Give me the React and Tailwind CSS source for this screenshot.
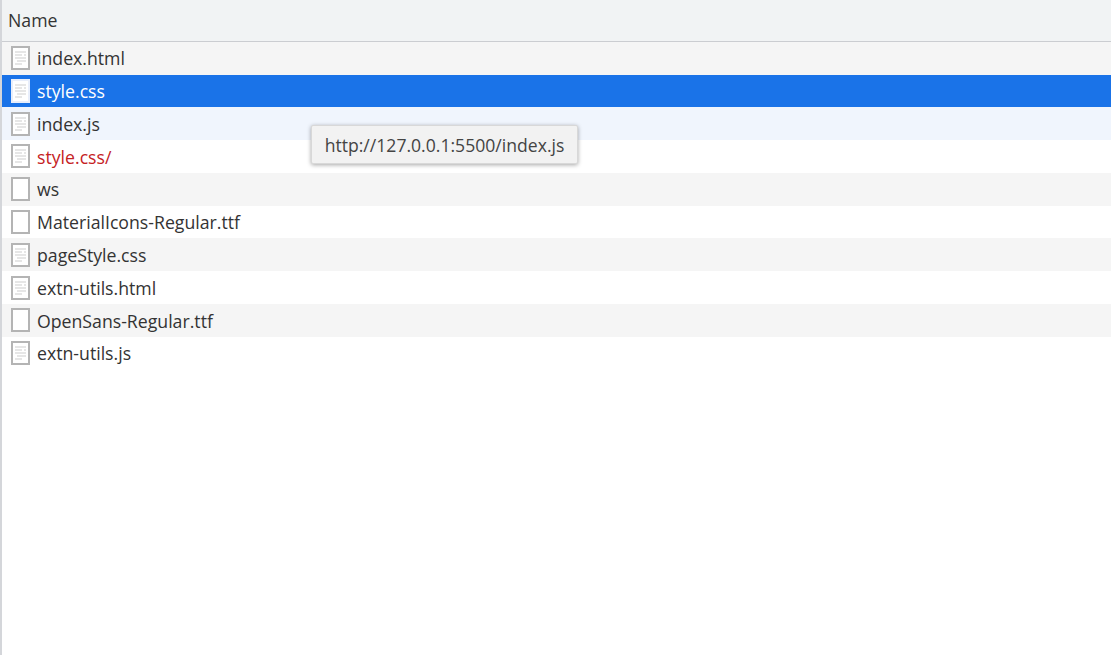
const files = [
  { name: "index.html", icon: "doc", bg: "bg-[#f5f5f5]" },
  { name: "style.css", icon: "doc", bg: "bg-[#1a73e8]", text: "text-white" },
  { name: "index.js", icon: "doc", bg: "bg-[#f0f5fd]" },
  { name: "style.css/", icon: "doc", bg: "bg-white", text: "text-[#c5221f]" },
  { name: "ws", icon: "blank", bg: "bg-[#f5f5f5]" },
  { name: "MaterialIcons-Regular.ttf", icon: "blank", bg: "bg-white" },
  { name: "pageStyle.css", icon: "doc", bg: "bg-[#f5f5f5]" },
  { name: "extn-utils.html", icon: "doc", bg: "bg-white" },
  { name: "OpenSans-Regular.ttf", icon: "blank", bg: "bg-[#f5f5f5]" },
  { name: "extn-utils.js", icon: "doc", bg: "bg-white" },
];

function FileIcon({ type, selected }) {
  return (
    <svg width="19" height="24" viewBox="0 0 19 24" className="shrink-0 blur-[0.4px]">
      <rect
        x="1"
        y="1"
        width="17"
        height="22"
        fill="#fff"
        stroke={selected ? "#e8eefb" : "#b4b4b4"}
        strokeWidth="2"
      />
      {type === "doc" && (
        <path
          d="M4 6h11M4 9h7M13 9h2M4 12h11M6 15h9M4 18h7"
          stroke="#dedede"
          strokeWidth="1.6"
          fill="none"
        />
      )}
    </svg>
  );
}

function FileRow({ file }) {
  const selected = file.name === "style.css";
  return (
    <div className={`flex h-[32.8px] items-center gap-[7px] pl-[9px] ${file.bg}`}>
      <FileIcon type={file.icon} selected={selected} />
      <span className={`pt-[2px] text-[17.7px] leading-none ${file.text || "text-[#333]"}`}>{file.name}</span>
    </div>
  );
}

export default function App() {
  return (
    <div className="relative h-[655px] w-[1111px] overflow-hidden border-l-2 border-l-[#d4d6da] bg-white font-['Open_Sans','Noto_Sans',sans-serif]">
      <div className="flex h-[42px] items-center border-b border-b-[#cbcdd1] bg-[#f1f3f4] pl-[6px] text-[17.7px] text-[#333]">
        Name
      </div>
      <div className="-mt-[0.3px]">
        {files.map((file) => (
          <FileRow key={file.name} file={file} />
        ))}
      </div>
      <div className="absolute left-[309px] top-[125px] flex h-[39px] w-[267px] items-center justify-center rounded-[2px] border border-[#d8d8d8] bg-[#f2f2f2] pt-[1px] text-[17.6px] text-[#444] shadow-[0_1px_4px_rgba(0,0,0,0.35)]">
        http://127.0.0.1:5500/index.js
      </div>
    </div>
  );
}
